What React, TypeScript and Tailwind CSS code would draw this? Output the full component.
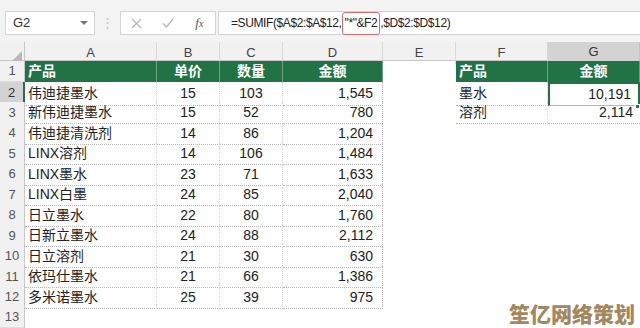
import React from "react";

type Row = [string, string, string, string];

const rows: Row[] = [
  ["伟迪捷墨水", "15", "103", "1,545"],
  ["新伟迪捷墨水", "15", "52", "780"],
  ["伟迪捷清洗剂", "14", "86", "1,204"],
  ["LINX溶剂", "14", "106", "1,484"],
  ["LINX墨水", "23", "71", "1,633"],
  ["LINX白墨", "24", "85", "2,040"],
  ["日立墨水", "22", "80", "1,760"],
  ["日新立墨水", "24", "88", "2,112"],
  ["日立溶剂", "21", "30", "630"],
  ["依玛仕墨水", "21", "66", "1,386"],
  ["多米诺墨水", "25", "39", "975"],
];

const summary: [string, string][] = [
  ["墨水", "10,191"],
  ["溶剂", "2,114"],
];

const cols = ["A", "B", "C", "D", "E", "F", "G"];

// 表头绿色单元格
const HeadCell = ({ text, align }: { text: string; align: "left" | "center" }) => (
  <div
    className={`flex h-full items-center bg-[#217346] border-r border-[#6f9f82] text-[14px] font-bold text-white ${
      align === "left" ? "pl-[3px]" : "justify-center"
    }`}
  >
    {text}
  </div>
);

// 数据单元格, 点线边框
const DataCell = ({
  text,
  align,
  last,
}: {
  text: string;
  align: "left" | "center" | "right";
  last?: boolean;
}) => (
  <div
    className={`flex h-full items-center border-b border-dotted border-b-[#b8b8b8] text-[14px] text-[#222] ${
      last ? "border-r border-r-[#b8b8b8] border-dotted" : "border-r border-r-[#d4d4d4]"
    } ${
      align === "left"
        ? "pl-[3px]"
        : align === "center"
        ? "justify-center"
        : "justify-end pr-[9px]"
    }`}
  >
    {text}
  </div>
);

const Empty = () => <div className="h-full" />;

export default function App() {
  const body = [];
  for (let r = 1; r <= 14; r++) {
    const cells: React.ReactNode[] = [];
    // 行号
    cells.push(
      <div
        key={`h${r}`}
        className={`flex h-full items-center justify-center border-b text-[13px] ${
          r === 2
            ? "bg-[#d3d3d3] border-b-[#c4c4c4] border-r-2 border-r-[#217346] text-[#333]"
            : "bg-[#f1f1f1] border-b-[#dcdcdc] border-r border-r-[#c8c8c8] text-[#555]"
        }`}
      >
        {r < 14 ? r : ""}
      </div>
    );
    if (r === 1) {
      cells.push(<HeadCell key="a" text="产品" align="left" />);
      cells.push(<HeadCell key="b" text="单价" align="center" />);
      cells.push(<HeadCell key="c" text="数量" align="center" />);
      cells.push(<HeadCell key="d" text="金额" align="center" />);
    } else if (r <= 12) {
      const d = rows[r - 2];
      cells.push(<DataCell key="a" text={d[0]} align="left" />);
      cells.push(<DataCell key="b" text={d[1]} align="center" />);
      cells.push(<DataCell key="c" text={d[2]} align="center" />);
      cells.push(<DataCell key="d" text={d[3]} align="right" last />);
    } else {
      cells.push(<Empty key="a" />, <Empty key="b" />, <Empty key="c" />, <Empty key="d" />);
    }
    cells.push(<Empty key="e" />);
    if (r === 1) {
      cells.push(<HeadCell key="f" text="产品" align="left" />);
      cells.push(<HeadCell key="g" text="金额" align="center" />);
    } else if (r <= 3) {
      const s = summary[r - 2];
      cells.push(<DataCell key="f" text={s[0]} align="left" />);
      cells.push(
        <div key="g" className="relative h-full">
          <div
            className={`flex h-full items-center justify-end pr-[7px] border-b border-dotted border-b-[#b8b8b8] text-[14px] text-[#222] ${
              r === 2 ? "border-2 border-solid border-[#217346]" : ""
            }`}
          >
            {s[1]}
          </div>
          {r === 2 && (
            <div className="absolute -bottom-[3px] right-0 h-[5px] w-[5px] border border-white bg-[#217346]" />
          )}
        </div>
      );
    } else {
      cells.push(<Empty key="f" />, <Empty key="g" />);
    }
    body.push(
      <div
        key={r}
        className="grid h-[20.5px] grid-cols-[25px_132px_63px_63px_100px_73px_92px_92px]"
      >
        {cells}
      </div>
    );
  }

  return (
    <div
      className="relative h-[328px] w-[640px] overflow-hidden bg-white"
      style={{ fontFamily: '"Liberation Sans", "Noto Sans CJK SC", sans-serif' }}
    >
      {/* 编辑栏 */}
      <div className="flex h-[42px] items-start bg-[#f3f3f3] pt-[11px]">
        <div className="ml-[5px] flex h-[24px] w-[90px] items-center justify-between border border-[#d4d4d4] bg-white pl-[7px] pr-[6px] text-[13px] text-[#333]">
          <span>G2</span>
          <svg width="8" height="5" viewBox="0 0 8 5">
            <path d="M0 0 L8 0 L4 4 Z" fill="#777" />
          </svg>
        </div>
        <div className="flex h-[24px] w-[25px] items-center justify-center text-[13px] text-[#c0c0c0]">
          ⋮
        </div>
        <div className="flex h-[24px] w-[96px] items-center border border-[#d4d4d4] bg-white">
          <span className="flex w-[32px] justify-center">
            <svg width="11" height="11" viewBox="0 0 11 11">
              <path d="M1 1 L10 10 M10 1 L1 10" stroke="#b4b4b4" strokeWidth="1.2" />
            </svg>
          </span>
          <span className="flex w-[32px] justify-center">
            <svg width="12" height="10" viewBox="0 0 12 10">
              <path d="M1 5.5 L4.5 9 L11 1" stroke="#b4b4b4" strokeWidth="1.2" fill="none" />
            </svg>
          </span>
          <span
            className="flex w-[32px] justify-center text-[13px] italic text-[#555]"
            style={{ fontFamily: '"Liberation Serif", serif' }}
          >
            f<span className="mt-[3px] text-[10px]">x</span>
          </span>
        </div>
        <div className="ml-[2px] flex h-[24px] flex-1 items-center border border-r-0 border-[#d4d4d4] bg-white pl-[12px] text-[12px] tracking-[-0.4px] text-[#222]">
          <span>=SUMIF($A$2:$A$12,</span>
          <span className="inline-flex h-[23px] items-center rounded-[3px] border border-[#dd6b6b] px-[2px]">
            "*"&amp;F2
          </span>
          <span>,$D$2:$D$12)</span>
        </div>
      </div>

      {/* 列标题 */}
      <div className="grid h-[19px] grid-cols-[25px_132px_63px_63px_100px_73px_92px_92px] border-b border-[#c8c8c8] bg-[#f1f1f1]">
        <div className="flex items-end justify-end border-r border-[#c8c8c8] pb-[3px] pr-[2px]">
          <svg width="10" height="10" viewBox="0 0 10 10">
            <path d="M10 0 L10 10 L0 10 Z" fill="#b9b9b9" />
          </svg>
        </div>
        {cols.map((c) => (
          <div
            key={c}
            className={`flex items-center justify-center border-r text-[13px] ${
              c === "G"
                ? "bg-[#d3d3d3] border-r-[#c4c4c4] border-b-2 border-b-[#217346] text-[#333]"
                : "border-r-[#d8d8d8] text-[#444]"
            }`}
          >
            {c}
          </div>
        ))}
      </div>

      {body}

      {/* 水印 */}
      <div
        className="absolute bottom-[4px] right-[5px] text-[21px] leading-none font-black text-[#a3875f]"
        style={{ fontFamily: '"Noto Sans CJK SC", sans-serif' }}
      >
        笙亿网络策划
      </div>
    </div>
  );
}
